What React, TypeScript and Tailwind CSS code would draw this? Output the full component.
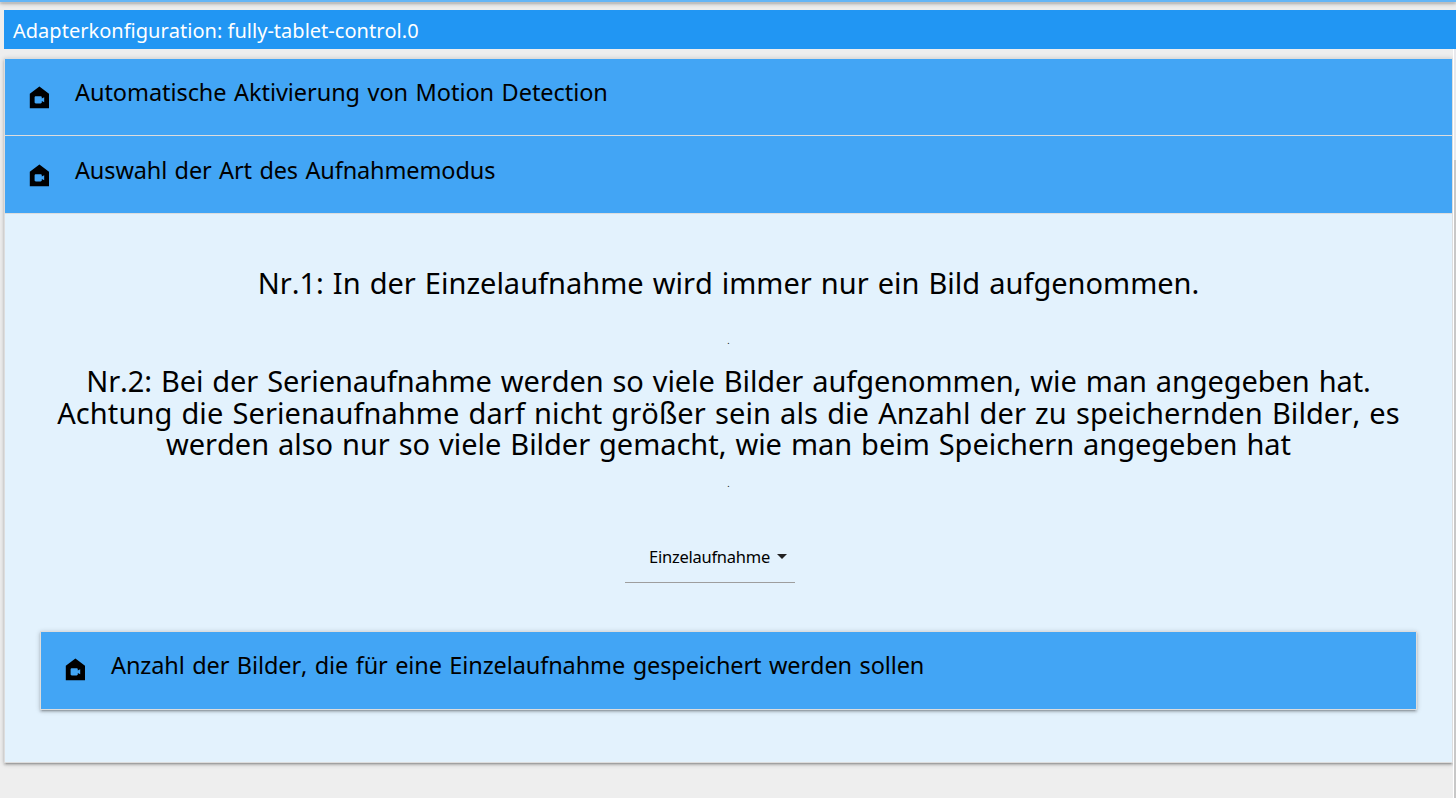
import React from 'react';

function CameraHouse() {
  return (
    <svg viewBox="0 0 24 24" className="mt-[23.6px] ml-[20.4px] size-[28.8px] shrink-0 fill-black">
      <path d="M12 3 4 9v12h16V9l-8-6zm4 13.06L14 15v1c0 .55-.45 1-1 1H9c-.55 0-1-.45-1-1v-4c0-.55.45-1 1-1h4c.55 0 1 .45 1 1v1l2-1.06v4.12z" />
    </svg>
  );
}

function SectionHeader({ title, className, rowClass }: { title: string; className: string; rowClass: string }) {
  return (
    <div className={`flex border-b border-[#ddd] bg-[#42a5f5] ${rowClass}`}>
      <CameraHouse />
      <h2 className={`mt-[15px] ml-[20.8px] text-[23.5px] leading-9 whitespace-nowrap [word-spacing:1.5px] ${className}`}>{title}</h2>
    </div>
  );
}

const cardShadow =
  'shadow-[0_2px_2px_0_rgba(0,0,0,0.14),0_3px_1px_-2px_rgba(0,0,0,0.12),0_1px_5px_0_rgba(0,0,0,0.2)]';

export default function App() {
  return (
    <div className="flex h-[798px] w-[1456px] flex-col overflow-hidden bg-[#eee] text-black [font-family:'Noto_Sans',sans-serif] [font-kerning:none]">
      <div className="h-0.5 shrink-0 bg-[#64b5f6] shadow-[0_2px_2px_0_rgba(0,0,0,0.14),0_3px_1px_-2px_rgba(0,0,0,0.12),0_1px_5px_0_rgba(0,0,0,0.4)]" />
      <header className="mt-2 ml-1 h-[39px] shrink-0 bg-[#2196f3] pl-[9px] text-[20px] leading-[41px] tracking-[0.02px] text-white">
        Adapterkonfiguration: fully-tablet-control.0
      </header>
      <div className="flex grow">
        <main className={`mt-[9px] ml-1 h-[705px] w-[1449px] border border-[#ddd] bg-[#e3f2fd] ${cardShadow}`}>
          <SectionHeader title="Automatische Aktivierung von Motion Detection" className="tracking-[-0.06px]" rowClass="h-[77px]" />
          <SectionHeader title="Auswahl der Art des Aufnahmemodus" className="tracking-[-0.13px]" rowClass="h-[78px] pt-px" />
          <div className="flex flex-col items-center text-[29px] leading-8 whitespace-nowrap [word-spacing:1.5px]">
            <p className="mt-[53px]">Nr.1: In der Einzelaufnahme wird immer nur ein Bild aufgenommen.</p>
            <p className="mt-[36px] text-[9px] leading-3">.</p>
            <p className="mt-[18px] text-center leading-[31.6px]">
              <span className="tracking-[-0.08px]">Nr.2: Bei der Serienaufnahme werden so viele Bilder aufgenommen, wie man angegeben hat.</span>
              <br />
              <span className="tracking-[0.085px]">Achtung die Serienaufnahme darf nicht größer sein als die Anzahl der zu speichernden Bilder, es</span>
              <br />
              <span className="tracking-[-0.04px]">werden also nur so viele Bilder gemacht, wie man beim Speichern angegeben hat</span>
            </p>
            <p className="mt-[18px] text-[9px] leading-3">.</p>
          </div>
          <div className="mt-[51px] ml-[620px] flex h-[42px] w-[170px] border-b border-[#9e9e9e] pl-6">
            <span className="w-[128px] text-[16.5px] leading-[32px] tracking-[-0.25px]">Einzelaufnahme</span>
            <svg viewBox="0 0 10 5" className="mt-[13px] h-[5px] w-[10px] fill-[#212121]">
              <path d="M0 0h10L5 5z" />
            </svg>
          </div>
          <div className={`mt-12 ml-[35px] w-[1377px] border border-b-0 border-[#ddd] ${cardShadow}`}>
            <SectionHeader title="Anzahl der Bilder, die für eine Einzelaufnahme gespeichert werden sollen" className="tracking-[-0.105px]" rowClass="h-[78px]" />
          </div>
        </main>
        <div className="ml-auto flex w-[3px] flex-col border-l border-white">
          <div className="h-[111px] bg-[#e8e8ec]" />
          <div className="grow bg-[#c8c8c8]" />
        </div>
      </div>
    </div>
  );
}
